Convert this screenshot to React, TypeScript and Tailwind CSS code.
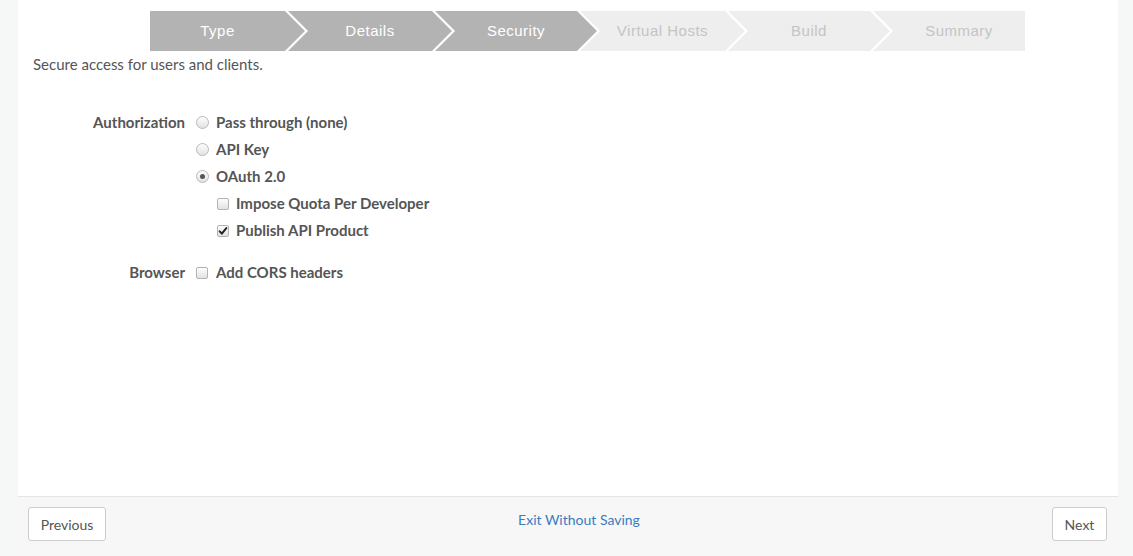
import React from 'react'

const steps = [
  { label: 'Type', width: 'w-[155px]', done: true },
  { label: 'Details', width: 'w-[164px]', done: true },
  { label: 'Security', width: 'w-[162px]', done: true },
  { label: 'Virtual Hosts', width: 'w-[165px]', done: false },
  { label: 'Build', width: 'w-[162px]', done: false },
  { label: 'Summary', width: 'w-[152px]', done: false },
]

function Wizard() {
  return (
    <div className="ml-[132px] flex h-[40px] mt-[11px]">
      {steps.map((s, i) => {
        const first = i === 0
        const last = i === steps.length - 1
        let shape = '[clip-path:polygon(0_0,calc(100%-20px)_0,100%_50%,calc(100%-20px)_100%,0_100%,20px_50%)]'
        if (first) shape = '[clip-path:polygon(0_0,calc(100%-20px)_0,100%_50%,calc(100%-20px)_100%,0_100%)]'
        if (last) shape = '[clip-path:polygon(0_0,100%_0,100%_100%,0_100%,20px_50%)]'
        return (
          <div
            key={s.label}
            className={`${s.width} ${shape} ${first ? '' : '-ml-[17px]'} ${first ? 'pl-0' : 'pl-[20px]'} ${last ? 'pr-0' : 'pr-[20px]'} flex shrink-0 items-center justify-center text-[15px] tracking-[0.5px] ${
              s.done ? 'bg-[#b3b3b3] text-white' : 'bg-[#eeeeee] text-[#c4c4c4]'
            }`}
            style={{ fontFamily: '"Liberation Sans", Arial, sans-serif' }}
          >
            {s.label}
          </div>
        )
      })}
    </div>
  )
}

function Radio({ checked }: { checked?: boolean }) {
  return (
    <span className="flex h-[13px] w-[13px] shrink-0 items-center justify-center rounded-full border border-[#b9b9b9] bg-gradient-to-b from-[#fdfdfd] to-[#e2e2e2]">
      {checked && <span className="h-[5px] w-[5px] rounded-full bg-[#555]" />}
    </span>
  )
}

function Checkbox({ checked }: { checked?: boolean }) {
  return (
    <span className="flex h-[12px] w-[12px] shrink-0 items-center justify-center rounded-[2px] border border-[#b3b3b3] bg-gradient-to-b from-[#fdfdfd] to-[#e2e2e2]">
      {checked && (
        <svg viewBox="0 0 12 12" className="h-[10px] w-[10px]">
          <path d="M2 6.5 L4.6 9.2 L10 2.5" fill="none" stroke="#222" strokeWidth="2.4" strokeLinecap="round" strokeLinejoin="round" />
        </svg>
      )}
    </span>
  )
}

function Row({ label, children }: { label?: string; children: React.ReactNode }) {
  return (
    <div className="flex h-[27px] items-center">
      <div className="w-[152px] shrink-0 text-right font-bold text-[#555]">{label}</div>
      <div className="ml-[11px] flex items-center">{children}</div>
    </div>
  )
}

export default function App() {
  return (
    <div
      className="flex h-[556px] flex-col bg-[#f6f7f7] pl-[18px] pr-[15px] text-[15px] text-[#555]"
      style={{ fontFamily: 'Lato, "Open Sans", sans-serif' }}
    >
      <div className="flex-1 bg-white">
        <Wizard />
        <p className="mt-[3px] pl-[15px] leading-[20px]">Secure access for users and clients.</p>

        <div className="mt-[35px] pl-[15px]">
          <Row label="Authorization">
            <Radio />
            <span className="ml-[7px] font-bold">Pass through (none)</span>
          </Row>
          <Row>
            <Radio />
            <span className="ml-[7px] font-bold">API Key</span>
          </Row>
          <Row>
            <Radio checked />
            <span className="ml-[7px] font-bold">OAuth 2.0</span>
          </Row>
          <Row>
            <span className="ml-[21px]" />
            <Checkbox />
            <span className="ml-[7px] font-bold">Impose Quota Per Developer</span>
          </Row>
          <Row>
            <span className="ml-[21px]" />
            <Checkbox checked />
            <span className="ml-[7px] font-bold">Publish API Product</span>
          </Row>
          <div className="h-[15px]" />
          <Row label="Browser">
            <Checkbox />
            <span className="ml-[8px] font-bold">Add CORS headers</span>
          </Row>
        </div>
      </div>

      <div className="flex h-[60px] items-start border-t border-[#e5e5e5] bg-[#f7f7f7] pl-[10px] pr-[11px] pt-[10px]">
        <button className="h-[34px] w-[78px] rounded-[3px] border border-[#cccccc] bg-white text-[14px] text-[#555]">
          Previous
        </button>
        <div className="flex-1 pt-[1px] text-center">
          <a className="text-[14px] text-[#3a7cc1]">Exit Without Saving</a>
        </div>
        <button className="h-[34px] w-[55px] rounded-[3px] border border-[#cccccc] bg-white text-[14px] text-[#555]">
          Next
        </button>
      </div>
    </div>
  )
}
